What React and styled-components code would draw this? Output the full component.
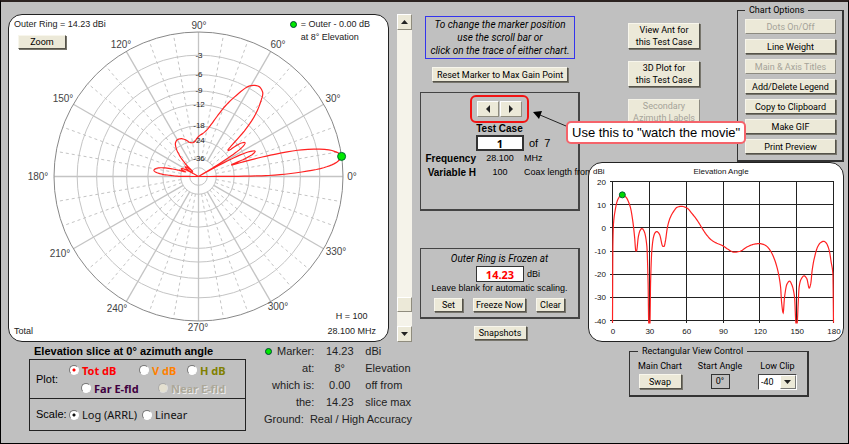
import React from 'react'
import styled, { createGlobalStyle } from 'styled-components'

const GlobalStyle = createGlobalStyle`
	* {
		box-sizing: border-box;
	}
	body {
		margin: 0;
		background: #c0c0c0;
		font-family: 'Liberation Sans', Arial, sans-serif;
		font-size: 11px;
		line-height: 13px;
		color: #000;
	}
	#root {
		overflow: hidden;
	}
`

const formFont = "Tahoma, 'Noto Sans', sans-serif"
const buttonFont = 'Roboto, sans-serif'

const Page = styled.main`
	display: grid;
	grid-template-columns: 404fr 160fr 256fr;
	column-gap: 8px;
	align-items: start;
	min-height: 100vh;
	padding: 1px 4px 0 7px;
	border: 1px solid #000;
	border-top: 2px solid #2b2220;
	background: #c0c0c0;
`
const Column = styled.div`
	display: flex;
	flex-direction: column;
	min-width: 0;
	align-items: ${(props) => props.$align || 'stretch'};
	padding-top: ${(props) => props.$top}px;
`
const Button = styled.button`
	display: flex;
	align-items: center;
	justify-content: center;
	width: ${(props) => (props.$width ? props.$width + 'px' : 'auto')};
	height: ${(props) => props.$height || 15}px;
	flex-shrink: 0;
	padding: 0;
	border: 1px solid;
	border-color: #f8f6ec #55534a #55534a #f8f6ec;
	box-shadow: 1px 1px 0 #77756c;
	background: #ece9d8;
	color: #000;
	font-family: ${buttonFont};
	font-size: 9px;
	line-height: 12px;
	white-space: pre;

	&:disabled {
		color: #a5a399;
		border-color: #f4f2e8 #8c8a80 #8c8a80 #f4f2e8;
		box-shadow: none;
	}
`

/* polar chart */
const PolarRow = styled.div`
	display: flex;
	gap: 8px;
`
const Card = styled.section`
	position: relative;
	display: grid;
	flex: 1;
	min-width: 0;
	border: 1px solid #222;
	border-radius: 14px;
	background: #fff;
	overflow: hidden;

	> * {
		grid-area: 1 / 1;
	}
`
const Drawing = styled.svg`
	display: block;
	width: 100%;
	height: auto;
	font-family: 'Liberation Sans', Arial, sans-serif;
`
const Captions = styled.div`
	position: relative;
	display: flex;
	flex-direction: column;
	justify-content: space-between;
	padding: 3px 12px 3px 5px;
	color: #222;
	font-size: 9px;
`
const CaptionLine = styled.div`
	display: flex;
	justify-content: space-between;
	align-items: ${(props) => props.$align};
`
const Stack = styled.div`
	display: flex;
	flex-direction: column;
	gap: ${(props) => props.$gap}px;
	align-items: ${(props) => props.$align || 'flex-start'};
`
const ZoomSlot = styled.div`
	padding-left: 4px;
`
const Legend = styled.p`
	margin: 0;
	padding: 0 6px 0 0;
	display: grid;
	grid-template-columns: 11px auto;
	align-items: center;
`
const Dot = styled.i`
	width: 7px;
	height: 7px;
	border: 1px solid #043;
	border-radius: 50%;
	background: #00e800;
`

/* scroll bar */
const ScrollBar = styled.div`
	display: flex;
	flex-direction: column;
	width: 15px;
`
const ArrowButton = styled.button`
	display: flex;
	align-items: center;
	justify-content: center;
	width: ${(props) => props.$width}px;
	height: 16px;
	padding: 0;
	border: 1px solid;
	border-color: #fff #8f8c7e #8f8c7e #fff;
	background: #ece9d8;
`
const Track = styled.input`
	appearance: none;
	writing-mode: vertical-lr;
	flex: 1;
	min-height: 0;
	width: 15px;
	margin: 0;
	background: #f5f3ea;

	&::-webkit-slider-thumb {
		appearance: none;
		width: 15px;
		height: 15px;
		border: 1px solid;
		border-color: #fff #8f8c7e #8f8c7e #fff;
		background: #ece9d8;
	}
`

/* below the polar chart */
const BottomRow = styled.div`
	display: flex;
	justify-content: space-between;
	padding: 3px 0 0 21px;
`
const SliceTitle = styled.h2`
	margin: 0 0 1px 5px;
	font-size: 11px;
	line-height: 13px;
`
const SliceBox = styled.div`
	width: 217px;
	border: 1px solid #222;
`
const SliceGroup = styled.fieldset`
	display: grid;
	grid-template-columns: 33px 1fr;
	align-items: center;
	height: ${(props) => props.$height}px;
	margin: 0;
	padding: 0 0 0 6px;
	border: 0;

	& + & {
		border-top: 1px solid #222;
	}
`
const RadioLine = styled.div`
	display: grid;
	grid-template-columns: ${(props) => props.$columns};
	padding-left: ${(props) => props.$indent || 0}px;
	height: 18px;
	align-items: center;
`
const RadioLabel = styled.label`
	display: flex;
	align-items: center;
	gap: 3px;
	color: ${(props) => props.$color || '#111'};
	font-family: ${formFont};
	font-size: 11px;
	font-weight: ${(props) => (props.$bold ? 700 : 400)};
	text-shadow: ${(props) => (props.$off ? '1px 1px 0 #eee' : 'none')};
	white-space: nowrap;
`
const Radio = styled.input`
	appearance: none;
	width: 10px;
	height: 10px;
	margin: 0;
	border: 1px solid;
	border-color: #777 #fff #fff #777;
	border-radius: 50%;
	background: #fff;
	color: inherit;

	&:checked {
		background: radial-gradient(circle, currentColor 0 1px, #fff 2px);
	}
	&:disabled {
		background: #e4e0d0;
		border-color: #aaa #ddd #ddd #aaa;
	}
`
const MarkerTable = styled.table`
	border-collapse: collapse;
	align-self: flex-start;
	margin-top: -2px;
	color: #222;
	font-size: 11px;

	td,
	th {
		height: 17px;
		padding: 0;
		font-weight: 400;
		white-space: nowrap;
	}
	th {
		text-align: right;
	}
	td:nth-child(2) {
		width: 51px;
		text-align: center;
	}
`
const MarkerName = styled.span`
	display: inline-flex;
	align-items: center;
	gap: 5px;
`

/* middle column */
const Note = styled.p`
	width: 150px;
	margin: 0 0 8px;
	padding: 1px 0;
	border: 1px solid #3434ee;
	font-family: ${buttonFont};
	font-size: 10px;
	font-style: italic;
	text-align: center;
	white-space: nowrap;
`
const Panel = styled.section`
	display: flex;
	flex-direction: column;
	align-items: center;
	align-self: stretch;
	min-height: ${(props) => props.$height}px;
	margin-top: ${(props) => props.$gap}px;
	padding-top: 2px;
	border: 2px solid #444;
	border-width: 1px 2px 2px 1px;
`
const Spinner = styled.div`
	position: relative;
	display: flex;
	gap: 1px;
	padding: 4px 5px;
	border: 2px solid #f21313;
	border-radius: 6px;
`
const Callout = styled.aside`
	position: absolute;
	z-index: 2;
	top: 24px;
	left: 94px;
	padding: 2px 4px;
	border: 2px solid #f5636a;
	border-radius: 5px;
	background: #fff;
	font-size: 13px;
	line-height: 15px;
	white-space: nowrap;
`
const Pointer = styled.svg`
	position: absolute;
	top: 11px;
	left: 60px;
	z-index: 1;
`
const FieldTable = styled.div`
	display: grid;
	grid-template-columns: minmax(0, 1fr) 48px minmax(0, 1fr);
	align-self: stretch;
	align-items: center;
	row-gap: 1px;
	padding-left: 1px;
	font-size: 9px;
	white-space: nowrap;
`
const FieldName = styled.b`
	font-size: 10px;
	text-align: right;
`
const FieldValue = styled.span`
	text-align: center;
`
const CaseCount = styled.span`
	padding-left: 5px;
	font-size: 11px;
`
const CaseLabel = styled.label`
	font-size: 10px;
	font-weight: 700;
	line-height: 12px;
`
const NumberBox = styled.input`
	width: 48px;
	height: 16px;
	padding: 0;
	border: ${(props) => props.$border};
	background: #fff;
	color: ${(props) => props.$color || '#000'};
	font: bold 11px ${formFont};
	text-align: center;
`
const ButtonRow = styled.div`
	display: flex;
	gap: 10px;
	margin-top: 3px;
`
const Frozen = styled.label`
	margin: 1px 0;
	font-family: ${buttonFont};
	font-size: 10px;
	font-style: italic;
`
const Hint = styled.span`
	font-size: 9px;
	white-space: nowrap;
`
const Unit = styled.span`
	padding-left: 3px;
`

/* right column */
const RightTop = styled.div`
	display: flex;
	justify-content: space-between;
	padding-left: 40px;
`
const TestButtons = styled.div`
	display: flex;
	flex-direction: column;
	gap: 12px;
	padding-top: 18px;
`
const Group = styled.fieldset`
	display: flex;
	min-width: 0;
	margin: 0;
	border: 1px solid #333;
	border-width: 1px 2px 2px 1px;
	font-family: ${buttonFont};
	font-size: 9px;

	legend {
		padding: 0 4px;
		line-height: 11px;
	}
`
const OptionsGroup = styled(Group)`
	flex-direction: column;
	gap: 5px;
	width: 107px;
	padding: 3px 6px 6px 7px;
`
const ViewGroup = styled(Group)`
	align-self: flex-start;
	justify-content: space-between;
	width: 180px;
	height: 51px;
	margin: 4px 0 0 41px;
	padding: 3px 10px 0 8px;
`
const ViewCell = styled.div`
	display: flex;
	flex-direction: column;
	align-items: center;
	gap: 2px;
	line-height: 12px;
	white-space: nowrap;
`
const AngleBox = styled.output`
	width: 19px;
	border: 1px solid #333;
	line-height: 13px;
	text-align: center;
`
const SelectBox = styled.div`
	display: grid;
	grid-template-columns: 1fr 16px;
	align-items: center;
	width: 39px;
	height: 16px;
	border: 1px solid;
	border-color: #444 #fff #fff #444;
	background: #fff;
`
const ClipSelect = styled.select`
	appearance: none;
	grid-area: 1 / 1 / 2 / 3;
	height: 14px;
	padding: 0 0 0 2px;
	border: 0;
	background: transparent;
	font: 9px ${buttonFont};
`
const SelectArrow = styled.span`
	grid-area: 1 / 2;
	display: flex;
	align-items: center;
	justify-content: center;
	height: 14px;
	border: 1px solid;
	border-color: #fff #777 #777 #fff;
	background: #ece9d8;
	pointer-events: none;
`

// elevation in degrees, gain in dBi
const gains = [
	[0, -41], [0.3, -8], [0.8, 1.8], [2.2, 7.6], [4, 11.8], [6, 13.6], [8, 14.23], [11, 13.2], [14.5, 9], [16.5, 3],
	[18, -4], [19, -10], [19.6, -10], [21, -4], [22.4, -1.2], [24, -0.3], [26, -1.8], [28, -8], [29, -24], [29.5, -41],
	[30.5, -41], [31, -24], [32, -10], [33.4, -4], [34.6, -2.2], [36, -1.6], [38.3, -2.8], [41, -8], [42, -8], [43, -6],
	[44.8, 0.4], [47, 4.4], [49.7, 7], [52.7, 8.9], [56, 9.3], [60.5, 8.6], [65, 6], [69.3, 3], [72.8, 0], [76.3, -2.8],
	[80, -5], [84, -6.4], [90, -7.8], [94.5, -9.4], [99, -10.5], [104, -10.1], [109.4, -8.3], [115, -7.1], [119.7, -6.8],
	[124.4, -7.5], [128.4, -9.7], [132.2, -14], [135.2, -19.8], [136.9, -25.6], [137.7, -32], [139, -36.7],
	[140.1, -30], [142, -24.4], [144.2, -23], [146.3, -24.9], [148.3, -30], [149.4, -41], [150.4, -41], [151.2, -33],
	[152, -25.6], [153.4, -22.4], [156, -20.7], [158.3, -22], [160.2, -26], [161.5, -24], [162.6, -18.4], [164.3, -13.3],
	[167, -8.3], [169.7, -6.3], [172, -5.8], [174, -6.5], [176.5, -9.7], [178.1, -14.8], [179.5, -19.8], [180, -41],
]

// monotone cubic interpolation, so that the nulls keep their depth
function samples(points, steps) {
	const slope = points.slice(1).map((p, i) => (p[1] - points[i][1]) / (p[0] - points[i][0]))
	const tangent = points.map((p, i) => {
		const a = slope[i - 1]
		const b = slope[i]
		if (a === undefined) return b
		if (b === undefined) return a
		return a * b <= 0 ? 0 : (2 * a * b) / (a + b)
	})
	const result = []
	for (let i = 0; i < slope.length; i++) {
		const h = points[i + 1][0] - points[i][0]
		for (let s = 0; s < steps; s++) {
			const t = s / steps
			const y =
				(2 * t ** 3 - 3 * t ** 2 + 1) * points[i][1] +
				(t ** 3 - 2 * t ** 2 + t) * h * tangent[i] +
				(3 * t ** 2 - 2 * t ** 3) * points[i + 1][1] +
				(t ** 3 - t ** 2) * h * tangent[i + 1]
			result.push([points[i][0] + h * t, y])
		}
	}
	result.push(points[points.length - 1])
	return result
}

const curve = samples(gains, 6)
const toPath = (points) => 'M' + points.map((p) => p.map((n) => n.toFixed(2)).join(' ')).join('L')

const outer = 144.5
const ringRadius = (db) => outer * 0.89 ** (-db / 2)
// a full null falls back to the centre
const gainRadius = (dbi) => (dbi <= -41 ? 0 : ringRadius(dbi - 14.23))
const polar = (angle, r) => [
	189.5 + r * Math.cos((angle * Math.PI) / 180),
	161.5 - r * Math.sin((angle * Math.PI) / 180),
]
const rings = [-3, -6, -9, -12, -18, -24, -36, -48]
const angleLabels = [
	[0, 343, 165], [30, 324, 87], [60, 269, 33], [90, 190, 14], [120, 112, 33], [150, 54, 87],
	[180, 29, 165], [210, 51, 242], [240, 108, 297], [270, 189, 316], [300, 269, 295], [330, 327, 240],
]

function PolarChart() {
	const marker = polar(8, outer)
	return (
		<Drawing viewBox='0 0 379 326' role='img' aria-label='Polar plot'>
			<g fill='none' stroke='#c4c4c4'>
				{rings.map((db) => (
					<circle key={db} cx='189.5' cy='161.5' r={ringRadius(db)} />
				))}
				{Array.from({ length: 36 }, (_, i) => i * 10).map((angle) => {
					const solid = angle % 30 === 0
					const [x1, y1] = polar(angle, angle % 90 === 0 ? 0 : ringRadius(-36))
					const [x2, y2] = polar(angle, outer)
					return (
						<line
							key={angle}
							x1={x1}
							y1={y1}
							x2={x2}
							y2={y2}
							strokeWidth={solid ? 1.3 : 1}
							strokeDasharray={solid ? undefined : '3 3'}
						/>
					)
				})}
				<circle cx='189.5' cy='161.5' r={outer} stroke='#888' />
			</g>
			<g fontSize='8' textAnchor='middle' fill='#222'>
				{rings.slice(0, 7).map((db) => (
					<text key={db} x='190' y={164 - ringRadius(db)}>
						{db}
					</text>
				))}
			</g>
			<g fontSize='10' textAnchor='middle' fill='#444'>
				{angleLabels.map(([angle, x, y]) => (
					<text key={angle} x={x} y={y}>
						{angle}°
					</text>
				))}
			</g>
			<path d={toPath(curve.map(([a, db]) => polar(a, gainRadius(db))))} fill='none' stroke='#f22' strokeWidth='1.2' />
			<circle cx={marker[0]} cy={marker[1]} r='4' fill='#00e800' stroke='#063' />
		</Drawing>
	)
}

const rectX = (angle) => 23.5 + angle * 1.2278
const rectY = (db) => 18.5 + (20 - db) * 2.3167

function RectChart() {
	return (
		<Drawing viewBox='0 0 254 178' role='img' aria-label='Rectangular plot'>
			<g stroke='#222' shapeRendering='crispEdges'>
				{[0, 30, 60, 90, 120, 150, 180].map((a) => (
					<line key={a} x1={rectX(a)} x2={rectX(a)} y1={rectY(20)} y2={rectY(-41)} />
				))}
				{[20, 10, 0, -10, -20, -30, -40].map((db) => (
					<line key={db} x1={rectX(-2)} x2={rectX(180)} y1={rectY(db)} y2={rectY(db)} />
				))}
			</g>
			<g fontSize='8' fill='#111'>
				<text x='4' y='11'>dBi</text>
				<text x='132' y='11' textAnchor='middle'>Elevation Angle</text>
				{[20, 10, 0, -10, -20, -30, -40].map((db) => (
					<text key={db} x='17' y={rectY(db) + 3} textAnchor='end'>{db}</text>
				))}
				{[0, 30, 60, 90, 120, 150, 180].map((a) => (
					<text key={a} x={rectX(a) + 0.5} y='171' textAnchor='middle'>{a}</text>
				))}
			</g>
			<path d={toPath(curve.map(([a, db]) => [rectX(a), rectY(db)]))} fill='none' stroke='#f22' strokeWidth='1.2' />
			<circle cx={rectX(8)} cy={rectY(14.23)} r='3' fill='#00d800' stroke='#063' />
		</Drawing>
	)
}

const arrows = {
	up: '0,4 3.5,0 7,4',
	down: '0,0 7,0 3.5,4',
	left: '4,0 4,8 0,4',
	right: '0,0 4,4 0,8',
}
const Arrow = ({ to }) => (
	<svg width={to === 'up' || to === 'down' ? 7 : 4} height={to === 'up' || to === 'down' ? 4 : 8} aria-hidden='true'>
		<polygon points={arrows[to]} fill='#222' />
	</svg>
)

const chartOptions = [
	['Dots On/Off', true],
	['Line Weight', false],
	['Main & Axis Titles', true],
	['Add/Delete Legend', false],
	['Copy to Clipboard', false],
	['Make GIF', false],
	['Print Preview', false],
]

class App extends React.Component {
	state = {
		position: 95,
		testCase: '1',
		outerRing: '14.23',
		plot: 'tot',
		scale: 'log',
		lowClip: '-40',
	}

	change = (field) => (event) => this.setState({ [field]: event.target.value })

	radio(group, value, text, props = {}) {
		return (
			<RadioLabel {...props}>
				<Radio
					type='radio'
					name={group}
					value={value}
					disabled={props.$off}
					checked={this.state[group] === value}
					onChange={this.change(group)}
				/>
				{text}
			</RadioLabel>
		)
	}

	render() {
		return (
			<>
				<GlobalStyle />
				<Page>
					<Column $top={11}>
						<PolarRow>
							<Card>
								<PolarChart />
								<Captions>
									<CaptionLine $align='flex-start'>
										<Stack $gap={4}>
											<span>Outer Ring = 14.23 dBi</span>
											<ZoomSlot>
												<Button $width={48} $height={14}>Zoom</Button>
											</ZoomSlot>
										</Stack>
										<Legend>
											<Dot />
											<span>= Outer - 0.00 dB</span>
											<i />
											<span>at 8° Elevation</span>
										</Legend>
									</CaptionLine>
									<CaptionLine $align='flex-end'>
										<span>Total</span>
										<Stack $gap={2} $align='center'>
											<span>H = 100</span>
											<span>28.100 MHz</span>
										</Stack>
									</CaptionLine>
								</Captions>
							</Card>
							<ScrollBar>
								<ArrowButton $width={15} aria-label='Up'>
									<Arrow to='up' />
								</ArrowButton>
								<Track
									type='range'
									aria-label='Marker position'
									value={this.state.position}
									onChange={this.change('position')}
								/>
								<ArrowButton $width={15} aria-label='Down'>
									<Arrow to='down' />
								</ArrowButton>
							</ScrollBar>
						</PolarRow>
						<BottomRow>
							<div>
								<SliceTitle>Elevation slice at 0° azimuth angle</SliceTitle>
								<SliceBox>
									<SliceGroup $height={38}>
										<span>Plot:</span>
										<div>
											<RadioLine $columns='70px 48px auto'>
												{this.radio('plot', 'tot', 'Tot dB', { $color: '#f00', $bold: true })}
												{this.radio('plot', 'v', 'V dB', { $color: '#ff8000', $bold: true })}
												{this.radio('plot', 'h', 'H dB', { $color: '#808000', $bold: true })}
											</RadioLine>
											<RadioLine $columns='77px auto' $indent={12}>
												{this.radio('plot', 'far', 'Far E-fld', { $color: '#400040', $bold: true })}
												{this.radio('plot', 'near', 'Near E-fld', { $color: '#aca899', $bold: true, $off: true })}
											</RadioLine>
										</div>
									</SliceGroup>
									<SliceGroup $height={32}>
										<span>Scale:</span>
										<RadioLine $columns='73px auto'>
											{this.radio('scale', 'log', 'Log (ARRL)')}
											{this.radio('scale', 'linear', 'Linear')}
										</RadioLine>
									</SliceGroup>
								</SliceBox>
							</div>
							<MarkerTable>
								<tbody>
									<tr>
										<th>
											<MarkerName>
												<Dot />
												Marker:
											</MarkerName>
										</th>
										<td>14.23</td>
										<td>dBi</td>
									</tr>
									<tr>
										<th>at:</th>
										<td>8°</td>
										<td>Elevation</td>
									</tr>
									<tr>
										<th>which is:</th>
										<td>0.00</td>
										<td>off from</td>
									</tr>
									<tr>
										<th>the:</th>
										<td>14.23</td>
										<td>slice max</td>
									</tr>
									<tr>
										<td colSpan={3}>Ground:&nbsp; Real / High Accuracy</td>
									</tr>
								</tbody>
							</MarkerTable>
						</BottomRow>
					</Column>

					<Column $top={13} $align='center'>
						<Note>
							To change the marker position
							<br />
							use the scroll bar or
							<br />
							click on the trace of either chart.
						</Note>
						<Button $width={136}>Reset Marker to Max Gain Point</Button>
						<Panel $gap={10} $height={119}>
							<Spinner>
								<ArrowButton $width={22} aria-label='Previous test case'>
									<Arrow to='left' />
								</ArrowButton>
								<ArrowButton $width={22} aria-label='Next test case'>
									<Arrow to='right' />
								</ArrowButton>
								<Pointer width='36' height='22' aria-hidden='true'>
									<line x1='8' y1='7' x2='34' y2='18' stroke='#222' />
									<polygon points='1,4 10,3 7,11' fill='#000' />
								</Pointer>
								<Callout>Use this to "watch the movie"</Callout>
							</Spinner>
							<CaseLabel htmlFor='case'>Test Case</CaseLabel>
							<FieldTable>
								<span />
								<NumberBox
									id='case'
									$border='2px solid #333'
									value={this.state.testCase}
									onChange={this.change('testCase')}
								/>
								<CaseCount>of&nbsp; 7</CaseCount>
								<FieldName>Frequency</FieldName>
								<FieldValue>28.100</FieldValue>
								<span>MHz</span>
								<FieldName>Variable H</FieldName>
								<FieldValue>100</FieldValue>
								<span>Coax length from</span>
							</FieldTable>
						</Panel>
						<Panel $gap={37} $height={71}>
							<Frozen htmlFor='ring'>Outer Ring is Frozen at</Frozen>
							<FieldTable>
								<span />
								<NumberBox
									id='ring'
									$border='1px solid #333'
									$color='#f00'
									value={this.state.outerRing}
									onChange={this.change('outerRing')}
								/>
								<Unit>dBi</Unit>
							</FieldTable>
							<Hint>Leave blank for automatic scaling.</Hint>
							<ButtonRow>
								<Button $width={29} $height={14}>Set</Button>
								<Button $width={53} $height={14}>Freeze Now</Button>
								<Button $width={29} $height={14}>Clear</Button>
							</ButtonRow>
						</Panel>
						<Column $top={7}>
							<Button $width={53} $height={14}>Snapshots</Button>
						</Column>
					</Column>

					<Column $top={2}>
						<RightTop>
							<TestButtons>
								<Button $width={72} $height={26}>{'View Ant for\nthis Test Case'}</Button>
								<Button $width={72} $height={26}>{'3D Plot for\nthis Test Case'}</Button>
								<Button $width={72} $height={26} disabled>{'Secondary\nAzimuth Labels'}</Button>
							</TestButtons>
							<OptionsGroup>
								<legend>Chart Options</legend>
								{chartOptions.map(([name, off]) => (
									<Button key={name} disabled={off}>
										{name}
									</Button>
								))}
							</OptionsGroup>
						</RightTop>
						<Card>
							<RectChart />
						</Card>
						<ViewGroup>
							<legend>Rectangular View Control</legend>
							<ViewCell>
								<span>Main Chart</span>
								<Button $width={43}>Swap</Button>
							</ViewCell>
							<ViewCell>
								<span>Start Angle</span>
								<AngleBox>0°</AngleBox>
							</ViewCell>
							<ViewCell>
								<label htmlFor='clip'>Low Clip</label>
								<SelectBox>
									<ClipSelect id='clip' value={this.state.lowClip} onChange={this.change('lowClip')}>
										<option>-40</option>
									</ClipSelect>
									<SelectArrow>
										<Arrow to='down' />
									</SelectArrow>
								</SelectBox>
							</ViewCell>
						</ViewGroup>
					</Column>
				</Page>
			</>
		)
	}
}

export default App
